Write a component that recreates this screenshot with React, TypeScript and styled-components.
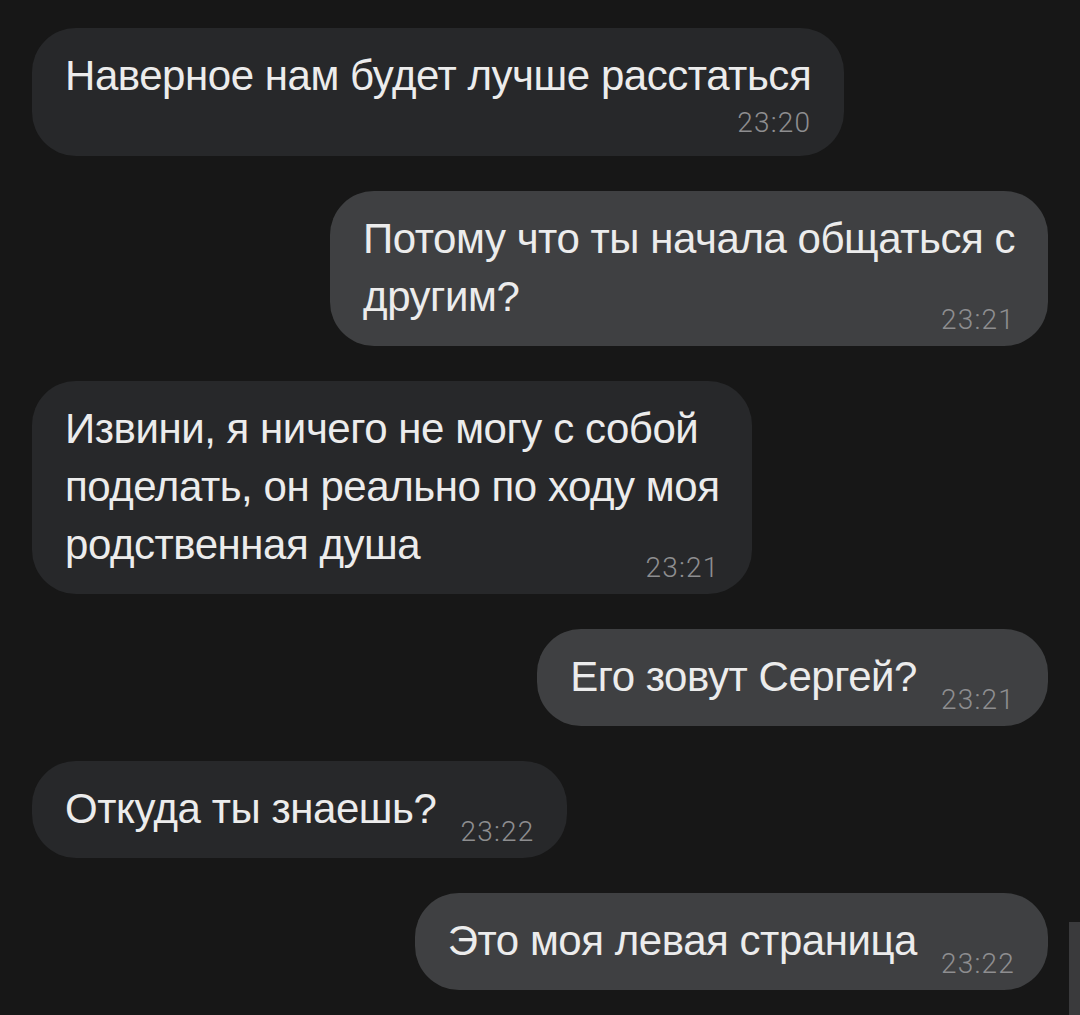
import styled, { createGlobalStyle } from "styled-components";

type Side = "in" | "out";

interface Message {
  side: Side;
  lines: string[];
  time: string;
  timeBelow?: boolean;
}

const messages: Message[] = [
  {
    side: "in",
    lines: ["Наверное нам будет лучше расстаться"],
    time: "23:20",
    timeBelow: true,
  },
  {
    side: "out",
    lines: ["Потому что ты начала общаться с", "другим?"],
    time: "23:21",
  },
  {
    side: "in",
    lines: [
      "Извини, я ничего не могу с собой",
      "поделать, он реально по ходу моя",
      "родственная душа",
    ],
    time: "23:21",
  },
  { side: "out", lines: ["Его зовут Сергей?"], time: "23:21" },
  { side: "in", lines: ["Откуда ты знаешь?"], time: "23:22" },
  { side: "out", lines: ["Это моя левая страница"], time: "23:22" },
];

const GlobalStyle = createGlobalStyle`
  html, body {
    margin: 0;
    padding: 0;
    background: #171717;
  }
  body {
    font-family: "Liberation Sans", Arial, sans-serif;
    overflow: hidden;
  }
`;

const Screen = styled.div`
  position: relative;
  width: 1080px;
  height: 1015px;
  background: #171717;
  overflow: hidden;
`;

const Feed = styled.div`
  display: flex;
  flex-direction: column;
  align-items: flex-start;
  gap: 35px;
  padding: 28px 32px;
`;

const Bubble = styled.div<{ $side: Side }>`
  align-self: ${({ $side }) => ($side === "out" ? "flex-end" : "flex-start")};
  display: flow-root;
  padding: 19px 33px 20px 33px;
  border-radius: 44px;
  background: ${({ $side }) => ($side === "out" ? "#3f4042" : "#27282a")};
  color: #ececec;
  font-size: 42px;
  line-height: 58px;
  letter-spacing: -0.45px;
  white-space: nowrap;
`;

const Time = styled.span`
  float: right;
  margin: 37px 0 -40px 24px;
  font-family: Roboto, "Liberation Sans", sans-serif;
  font-weight: 300;
  font-size: 28px;
  line-height: 30px;
  letter-spacing: 1.2px;
  color: #8e8e90;
`;

const TimeRow = styled.div`
  margin-top: 5px;
  text-align: right;
  font-family: Roboto, "Liberation Sans", sans-serif;
  font-weight: 300;
  font-size: 28px;
  line-height: 26px;
  letter-spacing: 1.2px;
  color: #8e8e90;
`;

const ScrollThumb = styled.div`
  position: absolute;
  right: 0;
  top: 922px;
  width: 11px;
  height: 93px;
  background: #3a3a3c;
`;

const ChatBubble = ({ message }: { message: Message }) => (
  <Bubble $side={message.side}>
    {message.lines.map((line, i) => (
      <span key={i}>
        {i > 0 && <br />}
        {line}
      </span>
    ))}
    {message.timeBelow ? (
      <TimeRow>{message.time}</TimeRow>
    ) : (
      <Time>{message.time}</Time>
    )}
  </Bubble>
);

export default function App() {
  return (
    <Screen>
      <GlobalStyle />
      <Feed>
        {messages.map((m, i) => (
          <ChatBubble key={i} message={m} />
        ))}
      </Feed>
      <ScrollThumb />
    </Screen>
  );
}
